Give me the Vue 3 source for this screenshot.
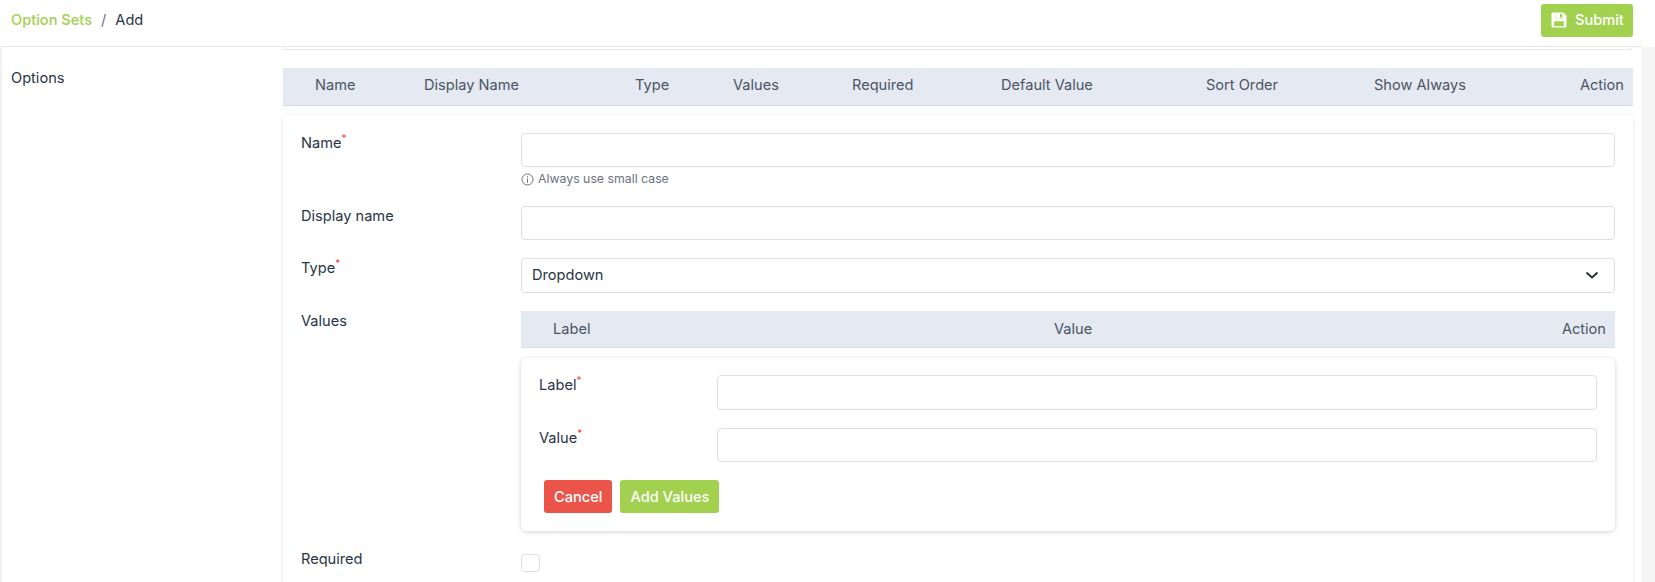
<script setup>
const cols = ['Name', 'Display Name', 'Type', 'Values', 'Required', 'Default Value', 'Sort Order', 'Show Always', 'Action']
</script>

<template>
  <div class="page">
    <header class="topbar">
      <nav class="crumbs">
        <a class="crumb-link">Option Sets</a>
        <span class="sep">/</span>
        <span>Add</span>
      </nav>
      <button class="btn green submit" type="button">
        <svg class="save" width="16" height="16" viewBox="0 0 16 16" aria-hidden="true">
          <path fill-rule="evenodd" fill="#fff" d="M1.5 0.5H12.5L15.5 3.5V14a1.5 1.5 0 0 1-1.5 1.5H2A1.5 1.5 0 0 1 .5 14V2A1.5 1.5 0 0 1 1.5 .5ZM9 2H11V5.5H9ZM3.2 9.2V14.3H12.8V9.2Z" />
          <path d="M4.3 .8V6.6H11.8V.8" fill="none" stroke="#d5e8a6" stroke-width=".6" />
        </svg>
        Submit
      </button>
    </header>

    <div class="body">
      <main class="content">
        <div class="prev-card"></div>
        <section class="options">
          <div class="options-label">Options</div>
          <div class="options-main">
            <div class="thead outer">
              <span v-for="c in cols" :key="c">{{ c }}</span>
            </div>
            <div class="card">
              <div class="row name-row">
                <label class="lbl">Name<sup>*</sup></label>
                <div class="field">
                  <input type="text" />
                  <p class="help">
                    <svg width="13" height="13" viewBox="0 0 13 13" aria-hidden="true">
                      <circle cx="6.5" cy="6.5" r="5.5" fill="none" stroke="#6b7280" stroke-width="1" />
                      <path d="M6.5 5.6V9.8M6.5 3.2V4.5" stroke="#6b7280" stroke-width="1" fill="none" />
                    </svg>
                    Always use small case
                  </p>
                </div>
              </div>
              <div class="row display-row">
                <label class="lbl">Display name</label>
                <div class="field"><input type="text" /></div>
              </div>
              <div class="row type-row">
                <label class="lbl">Type<sup>*</sup></label>
                <div class="field select-wrap">
                  <select><option>Dropdown</option></select>
                  <svg class="chev" width="14" height="8" viewBox="0 0 14 8" aria-hidden="true">
                    <path d="M1.5 1.5L7 6.5L12.5 1.5" fill="none" stroke="#1f2937" stroke-width="1.7" />
                  </svg>
                </div>
              </div>
              <div class="row values-row">
                <label class="lbl">Values</label>
                <div class="field">
                  <div class="thead inner">
                    <span>Label</span><span>Value</span><span>Action</span>
                  </div>
                  <div class="card sub">
                    <div class="subrow first">
                      <label class="lbl">Label<sup>*</sup></label>
                      <input type="text" />
                    </div>
                    <div class="subrow last">
                      <label class="lbl">Value<sup>*</sup></label>
                      <input type="text" />
                    </div>
                    <div class="actions">
                      <button class="btn red" type="button">Cancel</button>
                      <button class="btn green" type="button">Add Values</button>
                    </div>
                  </div>
                </div>
              </div>
              <div class="row check-row">
                <label class="lbl">Required</label>
                <div class="field"><span class="check"></span></div>
              </div>
            </div>
          </div>
        </section>
      </main>
    </div>
  </div>
</template>

<style>
html, body { margin: 0; background: #fff; overflow: hidden; }
</style>

<style scoped>
.page {
  width: 1655px;
  height: 582px;
  overflow: hidden;
  font-family: Inter, "Liberation Sans", sans-serif;
  font-size: 14.6px;
  line-height: 20px;
  color: #283445;
  background: #fff;
}
.topbar {
  box-sizing: border-box;
  height: 47px;
  padding: 4px 22px 0 11px;
  display: flex;
  justify-content: space-between;
  align-items: flex-start;
  background: #fff;
  position: relative;
  z-index: 1;
}
.topbar::after {
  content: "";
  position: absolute;
  left: 0;
  right: 13px;
  bottom: 0;
  height: 1px;
  background: #e5e7eb;
}
.crumbs { display: flex; gap: 9px; padding-top: 6px; }
.crumb-link { color: #a2d14f; font-weight: 500; }
.sep { color: #6b7280; }
.btn {
  border: 0;
  border-radius: 3px;
  height: 33px;
  padding: 0 10px;
  color: #fff;
  font: inherit;
  font-weight: 500;
  display: inline-flex;
  align-items: center;
}
.green { background: #a2d14f; }
.red { background: #eb5549; }
.submit { width: 92px; gap: 8px; padding: 0 10px 2px; }
.save { flex: none; }
.body {
  height: 535px;
  background: #f5f5f5;
  padding-right: 13px;
}
.content {
  height: 100%;
  box-sizing: border-box;
  margin-left: 2px;
  background: #fff;
  padding: 0 9px 0 281px;
  box-shadow: -1px 0 2px #eeeeee;
}
.prev-card {
  height: 3px;
  border: 1px solid #e5e7eb;
  border-top: 0;
  border-radius: 0 0 4px 4px;
  box-sizing: border-box;
}
.options { display: block; margin-top: 18px; position: relative; }
.options-label {
  position: absolute;
  left: -272px;
  top: 0;
  line-height: 20px;
}
.thead {
  display: grid;
  align-items: center;
  background: #e5e9f2;
  border-bottom: 1px solid #d9dde5;
  color: #4b5563;
  box-sizing: border-box;
  height: 38px;
}
.thead.outer {
  grid-template-columns: 109px 211px 98px 119px 149px 205px 168px 1fr auto;
  padding: 0 9px 3px 32px;
}
.thead.inner {
  grid-template-columns: 501px 1fr auto;
  padding: 0 9px 1px 32px;
  height: 37px;
}
.card {
  margin-top: 9px;
  padding: 18px 18px 0 18px;
  background: #fff;
  border-radius: 6px;
  box-shadow: 0 1px 4px rgba(0, 0, 0, 0.12);
  height: 480px;
  box-sizing: border-box;
}
.row { display: flex; align-items: flex-start; margin-bottom: 19px; }
.name-row { margin-bottom: 17px; }
.display-row { margin-bottom: 18px; }
.type-row { margin-bottom: 18px; }
.type-row select { height: 35px; }
.lbl { display: block; width: 220px; flex: none; }
sup { color: #ef4444; font-size: 10px; line-height: 0; }
.field { flex: 1; min-width: 0; }
input, select {
  display: block;
  box-sizing: border-box;
  width: 100%;
  height: 34px;
  background: #fff;
  border: 1px solid #dcdfe4;
  border-radius: 4px;
  padding: 0 10px;
  font: inherit;
  color: #283445;
  appearance: none;
  outline: none;
}
select { padding-bottom: 2px; }
.help {
  margin: 2px 0 0;
  display: flex;
  align-items: center;
  gap: 4px;
  font-size: 12.3px;
  line-height: 20px;
  color: #6b7280;
  height: 20px;
}
.select-wrap { position: relative; }
.chev { position: absolute; right: 16px; top: 13px; }
.values-row { margin-bottom: 18px; }
.card.sub {
  height: auto;
  margin-top: 10px;
  padding: 17px 18px 18px 18px;
  box-shadow: 0 1px 5px rgba(0, 0, 0, 0.18);
}
.subrow { display: flex; align-items: flex-start; margin-bottom: 19px; }
.subrow.first { margin-bottom: 18px; }
.subrow.first input { height: 35px; }
.subrow.last { margin-bottom: 18px; }
.subrow .lbl { width: 178px; }
.subrow input { flex: 1; width: auto; }
.actions { display: flex; gap: 8px; padding-left: 5px; }
.check {
  display: block;
  width: 19px;
  height: 18px;
  margin-top: 5px;
  box-sizing: border-box;
  border: 1px solid #dcdfe4;
  border-radius: 4px;
}
</style>
